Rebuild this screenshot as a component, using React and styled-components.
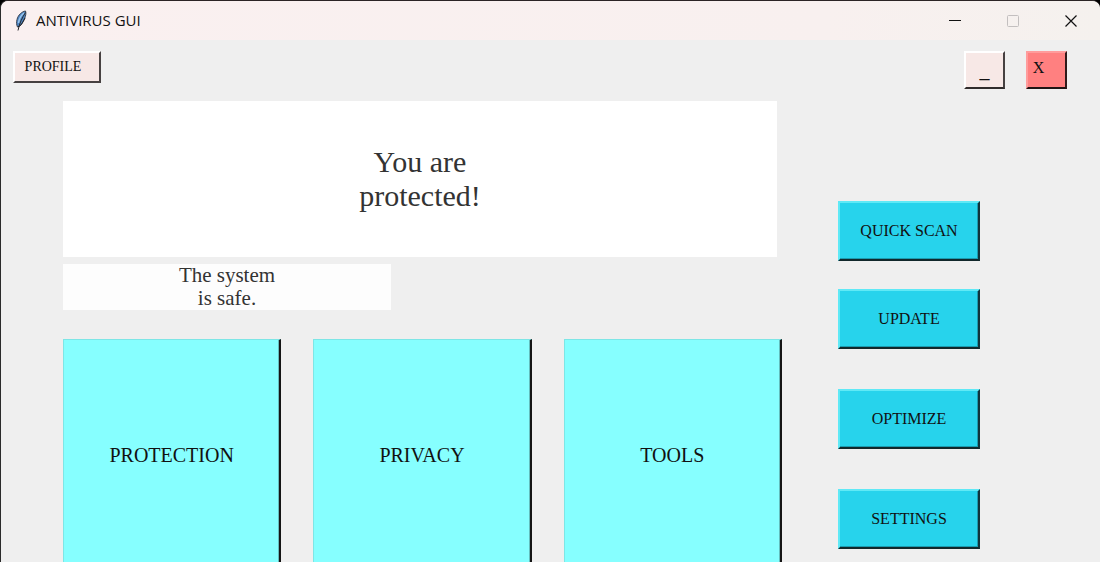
import React from "react";
import styled, { createGlobalStyle, css } from "styled-components";

const GlobalStyle = createGlobalStyle`
  *, *::before, *::after { box-sizing: border-box; }
  body { margin: 0; background: #000; }
`;

const serif = `"Liberation Serif", "Times New Roman", serif`;

const Window = styled.div`
  display: flex;
  flex-direction: column;
  height: 100vh;
  overflow: hidden;
  border-top: 1px solid #2b2425;
  border-left: 1px solid #2b2b2b;
  border-radius: 8px 8px 0 0;
  background: #efefef;
  font-family: ${serif};
`;

const TitleBar = styled.header`
  display: flex;
  flex: none;
  align-items: center;
  height: 39px;
  padding-left: 12px;
  background: linear-gradient(90deg, #faf0f0, #f8f0ef 75%, #f5f1ee);
`;

const Title = styled.h1`
  flex: 1;
  margin: 0 0 2px 6px;
  color: #111;
  font: 400 15px/20px "Open Sans", "Noto Sans", sans-serif;
`;

const CaptionButton = styled.button`
  display: grid;
  place-items: center;
  width: 58px;
  height: 38px;
  padding: 0;
  border: 0;
  background: transparent;
  color: #111;

  &:disabled { color: #c3bfbf; }
`;

const Content = styled.main`
  flex: 1;
  min-height: 0;
  overflow: hidden auto;
  scrollbar-width: none;
`;

const Toolbar = styled.div`
  display: flex;
  align-items: flex-start;
  gap: 21px;
  padding: 11px 33px 0 12px;
`;

const Spacer = styled.div`
  flex: 1;
`;

const raised = css`
  border-style: solid;
  border-width: 2px;
  color: #111;
  font-family: ${serif};
`;

const ProfileButton = styled.button`
  ${raised}
  width: 88px;
  height: 32px;
  padding: 0 8px 0 0;
  border-color: #fff #464141 #464141 #fff;
  background: #f7e8e6;
  font-size: 14px;
`;

const ControlButton = styled.button`
  ${raised}
  width: 41px;
  height: 38px;
  padding: ${(p) => (p.$danger ? "0 16px 4px 0" : "0")};
  border-color: ${(p) => (p.$danger ? "#ff9c9c #301a1a #201414 #ff9c9c" : "#fff #464141 #302c2c #fff")};
  background: ${(p) => (p.$danger ? "#ff8080" : "#f7e8e6")};
  font-size: ${(p) => (p.$danger ? "16px" : "20px")};
`;

const Dashboard = styled.div`
  display: grid;
  grid-template-columns: minmax(0, 1fr) 142px;
  gap: 56px;
  padding: 12px 120px 16px 62px;
`;

const Status = styled.section`
  display: flex;
  flex-direction: column;
`;

const Banner = styled.p`
  display: grid;
  place-items: center;
  min-height: 156px;
  margin: 0 5px 7px 0;
  background: #fff;
  color: #333;
  text-align: center;
  font-size: 30px;
  line-height: 34px;
`;

const Note = styled.p`
  width: 328px;
  max-width: 100%;
  margin: 0 0 29px;
  background: #fdfdfd;
  color: #333;
  text-align: center;
  font-size: 21px;
  line-height: 23px;
`;

const Tiles = styled.div`
  display: grid;
  grid-template-columns: repeat(3, minmax(0, 1fr));
  gap: 32px;
`;

const Tile = styled.button`
  height: 234px;
  padding: 0;
  border: 1px solid #7de6e6;
  border-right: 2px solid #151515;
  border-bottom: 2px solid #151515;
  background: #86ffff;
  box-shadow: inset -1px 0 #62bcbc;
  color: #111;
  font: 400 20px ${serif};
`;

const Actions = styled.nav`
  display: flex;
  flex-direction: column;
  gap: 40px;
  padding-top: 100px;
`;

const ActionGroup = styled.div`
  display: flex;
  flex-direction: column;
  gap: 28px;
`;

const ActionButton = styled.button`
  ${raised}
  width: 100%;
  height: 60px;
  padding: 0;
  border-color: #5fe9f6 #11333a #11272b #5fe9f6;
  background: #27d3ec;
  box-shadow: inset -1px -1px #1a9bb0;
  font-size: 16px;
`;

const Feather = () => (
  <svg width="17" height="22" viewBox="0 0 17 22" aria-hidden="true">
    <path d="M12.5 1C9 1.500 5 5 4 9.500c-.8 3-.4 5.500.5 7.500 3-1 5.500-4 7-8 1.300-3.500 1.800-6 1-8Z" fill="#4f86c4" stroke="#3a4250" />
    <path d="M11 3C8 5.500 6 9 5.500 13" fill="none" stroke="#9cc7ee" strokeWidth="1.500" />
    <path d="M12.500 2.500C9 8 6.500 13 5 20.500M12 8l-4 7-3 2" fill="none" stroke="#24272c" />
  </svg>
);

const MinimizeIcon = () => (
  <svg width="12" height="12" aria-hidden="true">
    <path d="M0 5.5h12" stroke="currentColor" />
  </svg>
);

const MaximizeIcon = () => (
  <svg width="12" height="12" fill="none" aria-hidden="true">
    <rect x=".5" y=".5" width="11" height="11" rx="1" stroke="currentColor" />
  </svg>
);

const CloseIcon = () => (
  <svg width="12" height="12" aria-hidden="true">
    <path d="m.5.5 11 11m0-11-11 11" stroke="currentColor" strokeWidth="1.2" />
  </svg>
);

export default function App() {
  return (
    <>
      <GlobalStyle />
      <Window>
        <TitleBar>
          <Feather />
          <Title>ANTIVIRUS GUI</Title>
          <CaptionButton aria-label="Minimize"><MinimizeIcon /></CaptionButton>
          <CaptionButton aria-label="Maximize" disabled><MaximizeIcon /></CaptionButton>
          <CaptionButton aria-label="Close"><CloseIcon /></CaptionButton>
        </TitleBar>
        <Content>
          <Toolbar>
            <ProfileButton>PROFILE</ProfileButton>
            <Spacer />
            <ControlButton>_</ControlButton>
            <ControlButton $danger>X</ControlButton>
          </Toolbar>
          <Dashboard>
            <Status>
              <Banner>
                <span>You are<br />protected!</span>
              </Banner>
              <Note>The system<br />is safe.</Note>
              <Tiles>
                {["PROTECTION", "PRIVACY", "TOOLS"].map((name) => (
                  <Tile key={name}>{name}</Tile>
                ))}
              </Tiles>
            </Status>
            <Actions>
              <ActionGroup>
                <ActionButton>QUICK SCAN</ActionButton>
                <ActionButton>UPDATE</ActionButton>
              </ActionGroup>
              <ActionButton>OPTIMIZE</ActionButton>
              <ActionButton>SETTINGS</ActionButton>
            </Actions>
          </Dashboard>
        </Content>
      </Window>
    </>
  );
}
